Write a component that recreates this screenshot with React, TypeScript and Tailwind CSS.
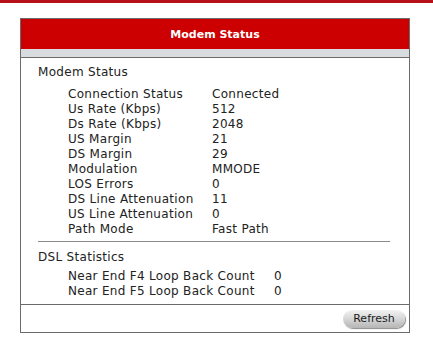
const modemRows: [string, string][] = [
  ['Connection Status', 'Connected'],
  ['Us Rate (Kbps)', '512'],
  ['Ds Rate (Kbps)', '2048'],
  ['US Margin', '21'],
  ['DS Margin', '29'],
  ['Modulation', 'MMODE'],
  ['LOS Errors', '0'],
  ['DS Line Attenuation', '11'],
  ['US Line Attenuation', '0'],
  ['Path Mode', 'Fast Path'],
];

const dslRows: [string, string][] = [
  ['Near End F4 Loop Back Count', '0'],
  ['Near End F5 Loop Back Count', '0'],
];

export default function App() {
  return (
    <div className="w-[433px] h-[360px] bg-white font-['DejaVu_Sans',Verdana,sans-serif] text-[12px] leading-[15px] tracking-[0.3px] text-[#222]">
      <div className="h-[3px] bg-[#b8101a]" />
      <div className="ml-[20px] mt-[15px] w-[390px] border border-[#6b6b6b]">
        <div className="h-[30px] bg-[#cc0000] flex items-center justify-center text-white text-[11px] tracking-normal font-bold">
          Modem Status
        </div>
        <div className="h-[9px] bg-[#d9dcdf] border-b border-[#6b6b6b]" />

        <div className="pl-[17px] pr-[19px] pt-[7px]">
          <div>Modem Status</div>
          <div className="mt-[7px] pl-[30px]">
            {modemRows.map(([label, value]) => (
              <div key={label} className="flex">
                <span className="w-[144px]">{label}</span>
                <span>{value}</span>
              </div>
            ))}
          </div>
          <div className="mt-[4px] h-px bg-[#8a8a8a]" />
          <div className="mt-[8px]">DSL Statistics</div>
          <div className="mt-[4px] pl-[30px]">
            {dslRows.map(([label, value]) => (
              <div key={label} className="flex">
                <span className="w-[206px]">{label}</span>
                <span>{value}</span>
              </div>
            ))}
          </div>
        </div>

        <div className="mt-[5px] border-t border-[#6b6b6b] h-[28px] flex items-center justify-end pr-[4px]">
          <button className="w-[62px] h-[18px] rounded-full bg-gradient-to-b from-[#f2f2f2] via-[#d6d6d6] to-[#b5b5b5] shadow-[1px_1px_1px_#8c8c8c] text-[11px] leading-[18px] tracking-normal text-[#1a1a1a] font-['DejaVu_Sans',Verdana,sans-serif]">
            Refresh
          </button>
        </div>
      </div>
    </div>
  );
}
